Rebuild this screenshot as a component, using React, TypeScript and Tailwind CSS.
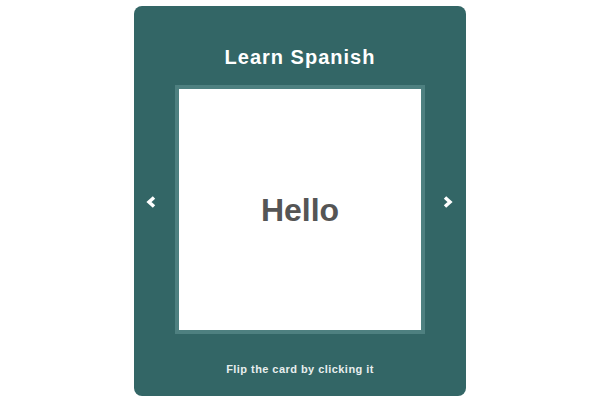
import React from "react";

export default function App() {
  return (
    <div className="w-[600px] h-[400px] bg-white flex justify-center" style={{ fontFamily: '"Liberation Sans", Arial, sans-serif' }}>
      <div className="mt-[6px] w-[332px] h-[390px] bg-[#336666] rounded-[8px] flex flex-col items-center">
        <h1 className="mt-[39px] h-[24px] leading-[24px] text-[20px] font-bold tracking-[1px] text-white">Learn Spanish</h1>
        <div className="mt-[16px] w-full flex items-center">
          <div className="w-[41px] flex pl-[12px] pb-[15px]">
            <svg width="10" height="12" viewBox="0 0 10 12">
              <polyline points="8,1.5 3,6 8,10.5" fill="none" stroke="white" strokeWidth="3.5" strokeLinejoin="miter" />
            </svg>
          </div>
          <div className="w-[250px] h-[249px] border-[4px] border-[#4e8080] bg-white flex items-center justify-center">
            <span className="text-[32px] font-bold text-[#555555] leading-none">Hello</span>
          </div>
          <div className="w-[41px] flex pl-[18px] pb-[15px]">
            <svg width="10" height="12" viewBox="0 0 10 12">
              <polyline points="2,1.5 7,6 2,10.5" fill="none" stroke="white" strokeWidth="3.5" strokeLinejoin="miter" />
            </svg>
          </div>
        </div>
        <p className="mt-[28px] text-[11px] font-bold tracking-[0.45px] text-[#e8eeee] leading-[14px]">Flip the card by clicking it</p>
      </div>
    </div>
  );
}
